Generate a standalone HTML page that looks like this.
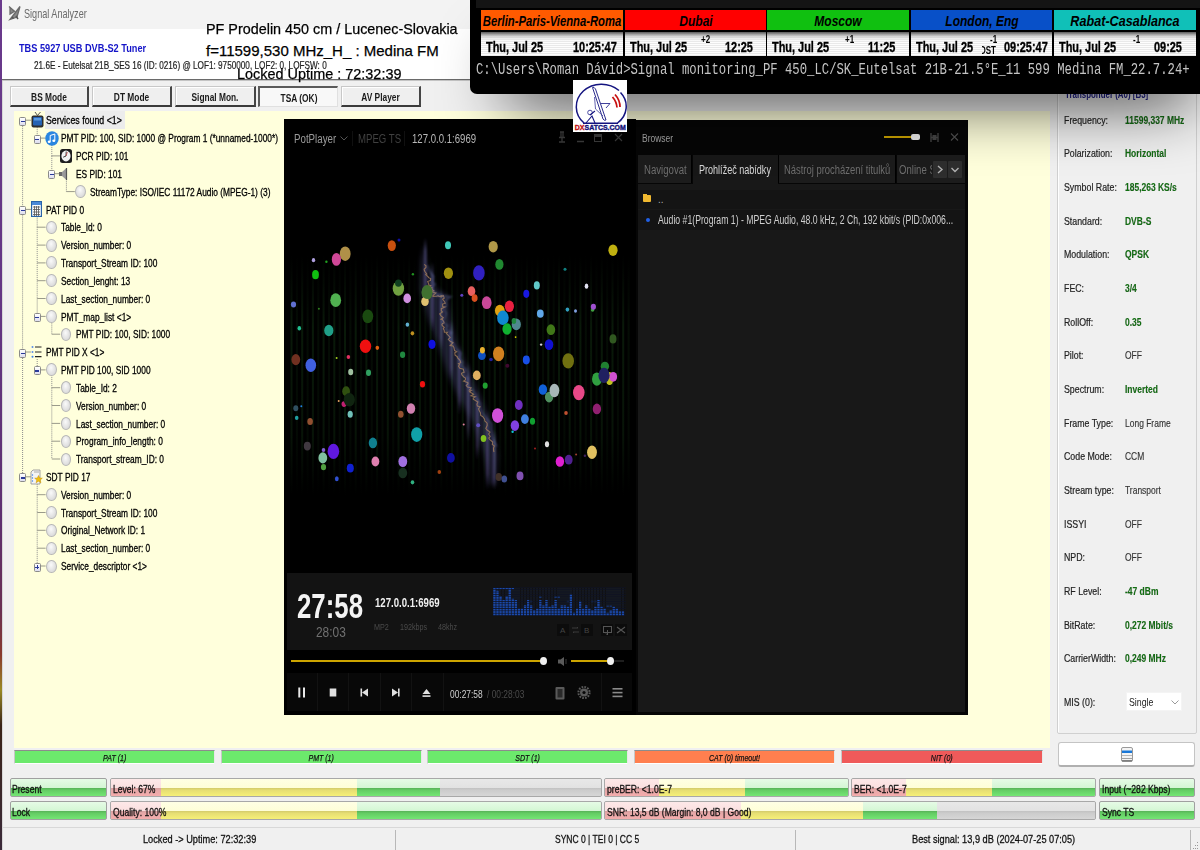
<!DOCTYPE html>
<html><head><meta charset="utf-8">
<style>
*{margin:0;padding:0;box-sizing:border-box}
html,body{width:1200px;height:850px;overflow:hidden;background:#f0f0f0;font-family:"Liberation Sans",sans-serif;position:relative}
.a{position:absolute}
.t{position:absolute;white-space:nowrap;transform-origin:0 0;line-height:1}
</style></head><body>
<!-- purple left strip -->
<div class="a" style="left:0;top:0;width:2px;height:850px;background:linear-gradient(#6a3a8c 0,#643684 300px,#5e3070 520px,#6a3052 610px,#8a3a2c 655px,#9a8a24 690px,#3a2418 725px,#3a2a3a 850px)"></div><div class="a" style="left:2px;top:0;width:1px;height:850px;background:#d8d8d8"></div>
<!-- title bar -->
<div class="a" style="left:2px;top:0;width:1198px;height:29px;background:#f3f3f3"></div>
<div class="t" style="left:24px;top:7px;font-size:13px;color:#6a6a6a;transform:scaleX(.70)">Signal Analyzer</div>
<svg class="a" style="left:8px;top:5px" width="13" height="16" viewBox="0 0 13 16"><path d="M1 1.5 L6 6 M2 2 V9 L7 6 M12 1.5 L2 14.5 L9 12 Z" stroke="#6a6a6a" stroke-width="1.3" fill="#8a8a8a"/><path d="M4 12 L5.5 13.5 M8 11 L10 14" stroke="#555" stroke-width="1.5"/></svg>
<!-- header white -->
<div class="a" style="left:2px;top:29px;width:1198px;height:50px;background:#fff"></div>
<div class="a" style="left:2px;top:79px;width:1198px;height:1px;background:#6a6a6a"></div><div class="a" style="left:2px;top:80px;width:1198px;height:1px;background:#c4c4c4"></div>
<div class="t" style="left:19px;top:43px;font-size:11.5px;font-weight:bold;color:#1414c8;transform:scaleX(.8)">TBS 5927 USB DVB-S2 Tuner</div>
<div class="t" style="left:34px;top:60px;font-size:10.5px;color:#222;-webkit-text-stroke:.2px #222;transform:scaleX(.78)">21.6E - Eutelsat 21B_SES 16 (ID: 0216) @ LOF1: 9750000, LOF2: 0, LOFSW: 0</div>
<div class="t" style="left:206px;top:21px;font-size:15px;color:#000;-webkit-text-stroke:.25px #000;transform:scaleX(.958)">PF Prodelin 450 cm / Lucenec-Slovakia</div>
<div class="t" style="left:206px;top:43px;font-size:15px;color:#000;-webkit-text-stroke:.25px #000;transform:scaleX(1.0)">f=11599,530 MHz_H_ : Medina FM</div>
<div class="t" style="left:237px;top:66px;font-size:15px;color:#000;-webkit-text-stroke:.25px #000;transform:scaleX(.962)">Locked Uptime : 72:32:39</div>


<!-- buttons -->
<style>
.btn{position:absolute;top:86px;height:21px;background:#efefef;border-top:1px solid #c8c8c8;border-left:1px solid #c8c8c8;border-right:2px solid #454545;border-bottom:2px solid #3a3a3a;box-shadow:inset 1px 1px 0 #fff}
.btn span{position:absolute;left:0;right:0;top:4px;text-align:center;font-size:11px;font-weight:bold;color:#1a1a1a;transform:scaleX(.76);white-space:nowrap}
.btn.on{background:#f8f8f8;border-top:2px solid #5a5a5a;border-left:2px solid #5a5a5a;border-right:1px solid #e0e0e0;border-bottom:1px solid #e0e0e0;box-shadow:none}
.btn.on span{top:4px;left:1px}
</style>
<div class="btn" style="left:10px;width:79px"><span>BS Mode</span></div>
<div class="btn" style="left:92px;width:80px"><span>DT Mode</span></div>
<div class="btn" style="left:175px;width:81px"><span>Signal Mon.</span></div>
<div class="btn on" style="left:258px;width:80px"><span>TSA (OK)</span></div>
<div class="btn" style="left:341px;width:80px"><span>AV Player</span></div>
<!-- tree area -->
<div class="a" style="left:14px;top:111px;width:1036px;height:637px;background:#ffffdc"></div>

<!-- TREE -->
<style>.tr{font-size:11px;color:#000;transform:scaleX(.76);-webkit-text-stroke:.3px #000}</style>
<div id="tree">
<svg class="a" style="left:14px;top:111px" width="300" height="470"><line x1="8.6" y1="9.2" x2="8.6" y2="98.4" stroke="#8c8c8c" stroke-width="1" stroke-dasharray="1 1"/><line x1="8.6" y1="9.2" x2="17.0" y2="9.2" stroke="#9a9a8a" stroke-width="1"/><line x1="23.2" y1="16.2" x2="23.2" y2="27.1" stroke="#8c8c8c" stroke-width="1" stroke-dasharray="1 1"/><line x1="23.2" y1="27.1" x2="31.6" y2="27.1" stroke="#9a9a8a" stroke-width="1"/><line x1="37.8" y1="44.9" x2="37.8" y2="62.7" stroke="#8c8c8c" stroke-width="1" stroke-dasharray="1 1"/><line x1="37.8" y1="34.1" x2="37.8" y2="44.9" stroke="#8c8c8c" stroke-width="1" stroke-dasharray="1 1"/><line x1="37.8" y1="44.9" x2="46.2" y2="44.9" stroke="#9a9a8a" stroke-width="1"/><line x1="37.8" y1="62.7" x2="46.2" y2="62.7" stroke="#9a9a8a" stroke-width="1"/><line x1="52.4" y1="69.7" x2="52.4" y2="80.6" stroke="#8c8c8c" stroke-width="1" stroke-dasharray="1 1"/><line x1="52.4" y1="80.6" x2="60.8" y2="80.6" stroke="#9a9a8a" stroke-width="1"/><line x1="8.6" y1="98.4" x2="8.6" y2="241.0" stroke="#8c8c8c" stroke-width="1" stroke-dasharray="1 1"/><line x1="8.6" y1="98.4" x2="17.0" y2="98.4" stroke="#9a9a8a" stroke-width="1"/><line x1="23.2" y1="116.2" x2="23.2" y2="134.1" stroke="#8c8c8c" stroke-width="1" stroke-dasharray="1 1"/><line x1="23.2" y1="105.4" x2="23.2" y2="116.2" stroke="#8c8c8c" stroke-width="1" stroke-dasharray="1 1"/><line x1="23.2" y1="116.2" x2="31.6" y2="116.2" stroke="#9a9a8a" stroke-width="1"/><line x1="23.2" y1="134.1" x2="23.2" y2="151.9" stroke="#8c8c8c" stroke-width="1" stroke-dasharray="1 1"/><line x1="23.2" y1="134.1" x2="31.6" y2="134.1" stroke="#9a9a8a" stroke-width="1"/><line x1="23.2" y1="151.9" x2="23.2" y2="169.7" stroke="#8c8c8c" stroke-width="1" stroke-dasharray="1 1"/><line x1="23.2" y1="151.9" x2="31.6" y2="151.9" stroke="#9a9a8a" stroke-width="1"/><line x1="23.2" y1="169.7" x2="23.2" y2="187.5" stroke="#8c8c8c" stroke-width="1" stroke-dasharray="1 1"/><line x1="23.2" y1="169.7" x2="31.6" y2="169.7" stroke="#9a9a8a" stroke-width="1"/><line x1="23.2" y1="187.5" x2="23.2" y2="205.4" stroke="#8c8c8c" stroke-width="1" stroke-dasharray="1 1"/><line x1="23.2" y1="187.5" x2="31.6" y2="187.5" stroke="#9a9a8a" stroke-width="1"/><line x1="23.2" y1="205.4" x2="31.6" y2="205.4" stroke="#9a9a8a" stroke-width="1"/><line x1="37.8" y1="212.4" x2="37.8" y2="223.2" stroke="#8c8c8c" stroke-width="1" stroke-dasharray="1 1"/><line x1="37.8" y1="223.2" x2="46.2" y2="223.2" stroke="#9a9a8a" stroke-width="1"/><line x1="8.6" y1="241.0" x2="8.6" y2="365.8" stroke="#8c8c8c" stroke-width="1" stroke-dasharray="1 1"/><line x1="8.6" y1="241.0" x2="17.0" y2="241.0" stroke="#9a9a8a" stroke-width="1"/><line x1="23.2" y1="248.0" x2="23.2" y2="258.9" stroke="#8c8c8c" stroke-width="1" stroke-dasharray="1 1"/><line x1="23.2" y1="258.9" x2="31.6" y2="258.9" stroke="#9a9a8a" stroke-width="1"/><line x1="37.8" y1="276.7" x2="37.8" y2="294.5" stroke="#8c8c8c" stroke-width="1" stroke-dasharray="1 1"/><line x1="37.8" y1="265.9" x2="37.8" y2="276.7" stroke="#8c8c8c" stroke-width="1" stroke-dasharray="1 1"/><line x1="37.8" y1="276.7" x2="46.2" y2="276.7" stroke="#9a9a8a" stroke-width="1"/><line x1="37.8" y1="294.5" x2="37.8" y2="312.4" stroke="#8c8c8c" stroke-width="1" stroke-dasharray="1 1"/><line x1="37.8" y1="294.5" x2="46.2" y2="294.5" stroke="#9a9a8a" stroke-width="1"/><line x1="37.8" y1="312.4" x2="37.8" y2="330.2" stroke="#8c8c8c" stroke-width="1" stroke-dasharray="1 1"/><line x1="37.8" y1="312.4" x2="46.2" y2="312.4" stroke="#9a9a8a" stroke-width="1"/><line x1="37.8" y1="330.2" x2="37.8" y2="348.0" stroke="#8c8c8c" stroke-width="1" stroke-dasharray="1 1"/><line x1="37.8" y1="330.2" x2="46.2" y2="330.2" stroke="#9a9a8a" stroke-width="1"/><line x1="37.8" y1="348.0" x2="46.2" y2="348.0" stroke="#9a9a8a" stroke-width="1"/><line x1="8.6" y1="365.8" x2="17.0" y2="365.8" stroke="#9a9a8a" stroke-width="1"/><line x1="23.2" y1="383.7" x2="23.2" y2="401.5" stroke="#8c8c8c" stroke-width="1" stroke-dasharray="1 1"/><line x1="23.2" y1="372.8" x2="23.2" y2="383.7" stroke="#8c8c8c" stroke-width="1" stroke-dasharray="1 1"/><line x1="23.2" y1="383.7" x2="31.6" y2="383.7" stroke="#9a9a8a" stroke-width="1"/><line x1="23.2" y1="401.5" x2="23.2" y2="419.3" stroke="#8c8c8c" stroke-width="1" stroke-dasharray="1 1"/><line x1="23.2" y1="401.5" x2="31.6" y2="401.5" stroke="#9a9a8a" stroke-width="1"/><line x1="23.2" y1="419.3" x2="23.2" y2="437.2" stroke="#8c8c8c" stroke-width="1" stroke-dasharray="1 1"/><line x1="23.2" y1="419.3" x2="31.6" y2="419.3" stroke="#9a9a8a" stroke-width="1"/><line x1="23.2" y1="437.2" x2="23.2" y2="455.0" stroke="#8c8c8c" stroke-width="1" stroke-dasharray="1 1"/><line x1="23.2" y1="437.2" x2="31.6" y2="437.2" stroke="#9a9a8a" stroke-width="1"/><line x1="23.2" y1="455.0" x2="31.6" y2="455.0" stroke="#9a9a8a" stroke-width="1"/></svg>
<div class="a" style="left:45px;top:111px;width:80px;height:18px;background:#ececec"></div>
<div class="a" style="left:19.1px;top:116.8px;width:7px;height:9px;border:1px solid #8a8a8a;border-radius:1.5px;background:linear-gradient(#fff,#dde)"><div style="position:absolute;left:0.5px;top:3px;width:4px;height:1.3px;background:#2a3a9a"></div></div>
<svg class="a" style="left:31.0px;top:111.2px" width="13" height="17" viewBox="0 0 13 17"><path d="M4 1 L6.5 4.5 L9.5 1" stroke="#444" fill="none" stroke-width="0.9"/><rect x="0.5" y="4.5" width="12" height="12" rx="2" fill="#2e2e2e"/><rect x="2" y="6" width="9" height="8.5" rx="1" fill="#2462b4"/><rect x="3" y="7" width="7" height="2.5" fill="#5a9ae0"/></svg>
<div class="t tr" style="left:46.3px;top:115.3px;transform:scaleX(.80)">Services found &lt;1&gt;</div>
<div class="a" style="left:33.7px;top:134.6px;width:7px;height:9px;border:1px solid #8a8a8a;border-radius:1.5px;background:linear-gradient(#fff,#dde)"><div style="position:absolute;left:0.5px;top:3px;width:4px;height:1.3px;background:#2a3a9a"></div></div>
<svg class="a" style="left:44.6px;top:130.6px" width="14" height="15" viewBox="0 0 14 15"><ellipse cx="7" cy="7.5" rx="6.7" ry="7.3" fill="#2a86e0"/><path d="M5.2 10.5 V4.5 L9.8 3 V9.5" stroke="#fff" fill="none" stroke-width="1"/><ellipse cx="4.2" cy="10.8" rx="1.5" ry="1.2" fill="#fff"/><ellipse cx="8.8" cy="9.8" rx="1.5" ry="1.2" fill="#fff"/></svg>
<div class="t tr" style="left:60.9px;top:133.2px">PMT PID: 100, SID: 1000 @ Program 1 (*unnamed-1000*)</div>
<svg class="a" style="left:60.2px;top:148.9px" width="12" height="14" viewBox="0 0 12 14"><rect x="0" y="0" width="12" height="14" rx="2.5" fill="#1e1e1e"/><ellipse cx="6" cy="7" rx="4.6" ry="5.4" fill="#f2f2f2"/><path d="M6 7 L3.2 8.2 M6 7 L6.2 2.5" stroke="#222" stroke-width="0.9"/><path d="M6 7 L7.5 3" stroke="#d03030" stroke-width="0.6"/></svg>
<div class="t tr" style="left:75.5px;top:151.0px">PCR PID: 101</div>
<div class="a" style="left:48.3px;top:170.2px;width:7px;height:9px;border:1px solid #8a8a8a;border-radius:1.5px;background:linear-gradient(#fff,#dde)"><div style="position:absolute;left:0.5px;top:3px;width:4px;height:1.3px;background:#2a3a9a"></div></div>
<svg class="a" style="left:58.2px;top:166.7px" width="11" height="14" viewBox="0 0 11 14"><rect x="1" y="5" width="3" height="4" fill="#6a6a6a"/><path d="M4 5 L8.5 1 V13 L4 9 Z" fill="#9a9a9a"/><path d="M8.5 1 V13" stroke="#555" stroke-width="1.2"/></svg>
<div class="t tr" style="left:75.5px;top:168.8px">ES PID: 101</div>
<div class="a" style="left:75.3px;top:185.1px;width:10.5px;height:13px;border-radius:50%;border:1px solid #b8b8b8;background:radial-gradient(ellipse at 45% 35%,#fafafa,#dcdcdc 70%,#c4c4c4)"></div>
<div class="t tr" style="left:90.1px;top:186.7px">StreamType: ISO/IEC 11172 Audio (MPEG-1) (3)</div>
<div class="a" style="left:19.1px;top:205.9px;width:7px;height:9px;border:1px solid #8a8a8a;border-radius:1.5px;background:linear-gradient(#fff,#dde)"><div style="position:absolute;left:0.5px;top:3px;width:4px;height:1.3px;background:#2a3a9a"></div></div>
<svg class="a" style="left:31.0px;top:201.4px" width="11" height="16" viewBox="0 0 11 16"><rect x="0.6" y="0.6" width="9.8" height="14.8" fill="#fff" stroke="#2a64a8" stroke-width="1.2"/><rect x="1" y="1" width="9" height="3" fill="#4a8ad8"/><path d="M2 6H9M2 8.5H9M2 11H9M2 13.5H9M3.5 5V15M5.5 5V15M7.5 5V15" stroke="#555" stroke-width="0.8"/></svg>
<div class="t tr" style="left:46.3px;top:204.5px">PAT PID 0</div>
<div class="a" style="left:46.1px;top:220.7px;width:10.5px;height:13px;border-radius:50%;border:1px solid #b8b8b8;background:radial-gradient(ellipse at 45% 35%,#fafafa,#dcdcdc 70%,#c4c4c4)"></div>
<div class="t tr" style="left:60.9px;top:222.3px">Table_Id: 0</div>
<div class="a" style="left:46.1px;top:238.6px;width:10.5px;height:13px;border-radius:50%;border:1px solid #b8b8b8;background:radial-gradient(ellipse at 45% 35%,#fafafa,#dcdcdc 70%,#c4c4c4)"></div>
<div class="t tr" style="left:60.9px;top:240.2px">Version_number: 0</div>
<div class="a" style="left:46.1px;top:256.4px;width:10.5px;height:13px;border-radius:50%;border:1px solid #b8b8b8;background:radial-gradient(ellipse at 45% 35%,#fafafa,#dcdcdc 70%,#c4c4c4)"></div>
<div class="t tr" style="left:60.9px;top:258.0px">Transport_Stream ID: 100</div>
<div class="a" style="left:46.1px;top:274.2px;width:10.5px;height:13px;border-radius:50%;border:1px solid #b8b8b8;background:radial-gradient(ellipse at 45% 35%,#fafafa,#dcdcdc 70%,#c4c4c4)"></div>
<div class="t tr" style="left:60.9px;top:275.8px">Section_lenght: 13</div>
<div class="a" style="left:46.1px;top:292.0px;width:10.5px;height:13px;border-radius:50%;border:1px solid #b8b8b8;background:radial-gradient(ellipse at 45% 35%,#fafafa,#dcdcdc 70%,#c4c4c4)"></div>
<div class="t tr" style="left:60.9px;top:293.6px">Last_section_number: 0</div>
<div class="a" style="left:33.7px;top:312.9px;width:7px;height:9px;border:1px solid #8a8a8a;border-radius:1.5px;background:linear-gradient(#fff,#dde)"><div style="position:absolute;left:0.5px;top:3px;width:4px;height:1.3px;background:#2a3a9a"></div></div>
<div class="a" style="left:46.1px;top:309.9px;width:10.5px;height:13px;border-radius:50%;border:1px solid #b8b8b8;background:radial-gradient(ellipse at 45% 35%,#fafafa,#dcdcdc 70%,#c4c4c4)"></div>
<div class="t tr" style="left:60.9px;top:311.5px">PMT_map_list &lt;1&gt;</div>
<div class="a" style="left:60.7px;top:327.7px;width:10.5px;height:13px;border-radius:50%;border:1px solid #b8b8b8;background:radial-gradient(ellipse at 45% 35%,#fafafa,#dcdcdc 70%,#c4c4c4)"></div>
<div class="t tr" style="left:75.5px;top:329.3px">PMT PID: 100, SID: 1000</div>
<div class="a" style="left:19.1px;top:348.5px;width:7px;height:9px;border:1px solid #8a8a8a;border-radius:1.5px;background:linear-gradient(#fff,#dde)"><div style="position:absolute;left:0.5px;top:3px;width:4px;height:1.3px;background:#2a3a9a"></div></div>
<svg class="a" style="left:31.0px;top:345.0px" width="11" height="14" viewBox="0 0 11 14"><circle cx="1.5" cy="2" r="1" fill="#5a8ee8"/><circle cx="1.5" cy="7" r="1" fill="#5a8ee8"/><circle cx="1.5" cy="11.7" r="1" fill="#3a7ee8"/><path d="M4 2H10.5M4 7H10.5M4 11.7H10.5" stroke="#222" stroke-width="1.2"/></svg>
<div class="t tr" style="left:46.3px;top:347.1px">PMT PID X &lt;1&gt;</div>
<div class="a" style="left:33.7px;top:366.4px;width:7px;height:9px;border:1px solid #8a8a8a;border-radius:1.5px;background:linear-gradient(#fff,#dde)"><div style="position:absolute;left:0.5px;top:3px;width:4px;height:1.3px;background:#2a3a9a"></div></div>
<div class="a" style="left:46.1px;top:363.4px;width:10.5px;height:13px;border-radius:50%;border:1px solid #b8b8b8;background:radial-gradient(ellipse at 45% 35%,#fafafa,#dcdcdc 70%,#c4c4c4)"></div>
<div class="t tr" style="left:60.9px;top:365.0px">PMT PID 100, SID 1000</div>
<div class="a" style="left:60.7px;top:381.2px;width:10.5px;height:13px;border-radius:50%;border:1px solid #b8b8b8;background:radial-gradient(ellipse at 45% 35%,#fafafa,#dcdcdc 70%,#c4c4c4)"></div>
<div class="t tr" style="left:75.5px;top:382.8px">Table_Id: 2</div>
<div class="a" style="left:60.7px;top:399.0px;width:10.5px;height:13px;border-radius:50%;border:1px solid #b8b8b8;background:radial-gradient(ellipse at 45% 35%,#fafafa,#dcdcdc 70%,#c4c4c4)"></div>
<div class="t tr" style="left:75.5px;top:400.6px">Version_number: 0</div>
<div class="a" style="left:60.7px;top:416.9px;width:10.5px;height:13px;border-radius:50%;border:1px solid #b8b8b8;background:radial-gradient(ellipse at 45% 35%,#fafafa,#dcdcdc 70%,#c4c4c4)"></div>
<div class="t tr" style="left:75.5px;top:418.5px">Last_section_number: 0</div>
<div class="a" style="left:60.7px;top:434.7px;width:10.5px;height:13px;border-radius:50%;border:1px solid #b8b8b8;background:radial-gradient(ellipse at 45% 35%,#fafafa,#dcdcdc 70%,#c4c4c4)"></div>
<div class="t tr" style="left:75.5px;top:436.3px">Program_info_length: 0</div>
<div class="a" style="left:60.7px;top:452.5px;width:10.5px;height:13px;border-radius:50%;border:1px solid #b8b8b8;background:radial-gradient(ellipse at 45% 35%,#fafafa,#dcdcdc 70%,#c4c4c4)"></div>
<div class="t tr" style="left:75.5px;top:454.1px">Transport_stream_ID: 0</div>
<div class="a" style="left:19.1px;top:473.3px;width:7px;height:9px;border:1px solid #8a8a8a;border-radius:1.5px;background:linear-gradient(#fff,#dde)"><div style="position:absolute;left:0.5px;top:3px;width:4px;height:1.3px;background:#2a3a9a"></div></div>
<svg class="a" style="left:30.0px;top:468.8px" width="13" height="16" viewBox="0 0 13 16"><path d="M1 3 L3 1 H10 V15 H1 Z" fill="#f4f4f4" stroke="#999" stroke-width="0.9"/><path d="M4 3H9" stroke="#aaa"/><circle cx="2.5" cy="6" r="0.7" fill="#3a7ee8"/><circle cx="2.5" cy="9" r="0.7" fill="#3a7ee8"/><circle cx="2.5" cy="12" r="0.7" fill="#3a7ee8"/><path d="M8.5 6.5 L9.6 9 L12.3 9.2 L10.2 11 L10.9 13.7 L8.5 12.2 L6.1 13.7 L6.8 11 L4.7 9.2 L7.4 9 Z" fill="#f0c010" stroke="#c89000" stroke-width="0.5"/></svg>
<div class="t tr" style="left:46.3px;top:471.9px">SDT PID 17</div>
<div class="a" style="left:46.1px;top:488.2px;width:10.5px;height:13px;border-radius:50%;border:1px solid #b8b8b8;background:radial-gradient(ellipse at 45% 35%,#fafafa,#dcdcdc 70%,#c4c4c4)"></div>
<div class="t tr" style="left:60.9px;top:489.8px">Version_number: 0</div>
<div class="a" style="left:46.1px;top:506.0px;width:10.5px;height:13px;border-radius:50%;border:1px solid #b8b8b8;background:radial-gradient(ellipse at 45% 35%,#fafafa,#dcdcdc 70%,#c4c4c4)"></div>
<div class="t tr" style="left:60.9px;top:507.6px">Transport_Stream ID: 100</div>
<div class="a" style="left:46.1px;top:523.8px;width:10.5px;height:13px;border-radius:50%;border:1px solid #b8b8b8;background:radial-gradient(ellipse at 45% 35%,#fafafa,#dcdcdc 70%,#c4c4c4)"></div>
<div class="t tr" style="left:60.9px;top:525.4px">Original_Network ID: 1</div>
<div class="a" style="left:46.1px;top:541.7px;width:10.5px;height:13px;border-radius:50%;border:1px solid #b8b8b8;background:radial-gradient(ellipse at 45% 35%,#fafafa,#dcdcdc 70%,#c4c4c4)"></div>
<div class="t tr" style="left:60.9px;top:543.3px">Last_section_number: 0</div>
<div class="a" style="left:33.7px;top:562.5px;width:7px;height:9px;border:1px solid #8a8a8a;border-radius:1.5px;background:linear-gradient(#fff,#dde)"><div style="position:absolute;left:0.5px;top:3px;width:4px;height:1.3px;background:#2a3a9a"></div><div style="position:absolute;left:1.9px;top:1.5px;width:1.3px;height:4.3px;background:#2a3a9a"></div></div>
<div class="a" style="left:46.1px;top:559.5px;width:10.5px;height:13px;border-radius:50%;border:1px solid #b8b8b8;background:radial-gradient(ellipse at 45% 35%,#fafafa,#dcdcdc 70%,#c4c4c4)"></div>
<div class="t tr" style="left:60.9px;top:561.1px">Service_descriptor &lt;1&gt;</div>
</div>
<!-- /TREE -->

<!-- RIGHT PANEL -->
<style>
.rl{position:absolute;left:1064px;font-size:11px;color:#222;-webkit-text-stroke:.2px #222;margin-top:-1px;transform:scaleX(.8);transform-origin:0 0;white-space:nowrap;line-height:1}
.rv{position:absolute;left:1125px;font-size:11px;color:#333;-webkit-text-stroke:.15px #333;transform:scaleX(.77);transform-origin:0 0;white-space:nowrap;line-height:1}
.rv.g{color:#107010;font-weight:bold}
</style>
<div class="a" style="left:1057px;top:86px;width:140px;height:648px;border:1px solid #d0d0d0;border-radius:2px;box-shadow:inset 1px 1px 0 #fff"></div>
<div class="t" style="left:1065px;top:89px;font-size:11px;font-weight:bold;color:#20208a;transform:scaleX(.72)">Transponder (A0) [B3]</div>
<div class="rl" style="top:115.6px">Frequency:</div><div class="rv g" style="top:114.6px">11599,337 MHz</div>
<div class="rl" style="top:149.3px">Polarization:</div><div class="rv g" style="top:148.3px">Horizontal</div>
<div class="rl" style="top:182.9px">Symbol Rate:</div><div class="rv g" style="top:181.9px">185,263 KS/s</div>
<div class="rl" style="top:216.6px">Standard:</div><div class="rv g" style="top:215.6px">DVB-S</div>
<div class="rl" style="top:250.2px">Modulation:</div><div class="rv g" style="top:249.2px">QPSK</div>
<div class="rl" style="top:283.9px">FEC:</div><div class="rv g" style="top:282.9px">3/4</div>
<div class="rl" style="top:317.6px">RollOff:</div><div class="rv g" style="top:316.6px">0.35</div>
<div class="rl" style="top:351.2px">Pilot:</div><div class="rv" style="top:350.2px">OFF</div>
<div class="rl" style="top:384.9px">Spectrum:</div><div class="rv g" style="top:383.9px">Inverted</div>
<div class="rl" style="top:418.5px">Frame Type:</div><div class="rv" style="top:417.5px">Long Frame</div>
<div class="rl" style="top:452.2px">Code Mode:</div><div class="rv" style="top:451.2px">CCM</div>
<div class="rl" style="top:485.9px">Stream type:</div><div class="rv" style="top:484.9px">Transport</div>
<div class="rl" style="top:519.5px">ISSYI</div><div class="rv" style="top:518.5px">OFF</div>
<div class="rl" style="top:553.2px">NPD:</div><div class="rv" style="top:552.2px">OFF</div>
<div class="rl" style="top:586.8px">RF Level:</div><div class="rv g" style="top:585.8px">-47 dBm</div>
<div class="rl" style="top:620.5px">BitRate:</div><div class="rv g" style="top:619.5px">0,272 Mbit/s</div>
<div class="rl" style="top:654.2px">CarrierWidth:</div><div class="rv g" style="top:653.2px">0,249 MHz</div>
<div class="rl" style="top:698.2px">MIS (0):</div>
<div class="a" style="left:1126px;top:692px;width:56px;height:19px;background:#fff;border:1px solid #f4f4f4"></div>
<div class="t" style="left:1129px;top:697px;font-size:11px;color:#222;transform:scaleX(.8)">Single</div>
<svg class="a" style="left:1171px;top:700px" width="8" height="5"><path d="M0.5 0.5 L4 4 L7.5 0.5" stroke="#9a9a9a" fill="none"/></svg>
<!-- status pills -->
<style>
.pill{position:absolute;top:750px;height:14px;border-top:1px solid #8c8c8c;border-bottom:1px solid #fff;border-left:1px solid #c8c8c8;border-right:1px solid #e8e8e8;font-size:9.5px;font-style:italic;color:#111;text-align:center;line-height:13px;-webkit-text-stroke:.25px #111}
.pill span{display:inline-block;transform:scaleX(.74)}
</style>
<div class="pill" style="left:14px;width:201px;background:#6ce96c"><span>PAT (1)</span></div>
<div class="pill" style="left:221px;width:201px;background:#6ce96c"><span>PMT (1)</span></div>
<div class="pill" style="left:427px;width:201px;background:#6ce96c"><span>SDT (1)</span></div>
<div class="pill" style="left:634px;width:201px;background:#ff7f4f"><span>CAT (0) timeout!</span></div>
<div class="pill" style="left:841px;width:202px;background:#ef5a5a"><span>NIT (0)</span></div>
<div class="a" style="left:1058px;top:742px;width:137px;height:25px;background:#fff;border:1px solid #c4c4c4;border-bottom:2px solid #b0b0b0;border-radius:3px"></div>
<!-- icon in white button -->
<svg class="a" style="left:1121px;top:747px" width="12" height="15" viewBox="0 0 12 15"><rect x="0.5" y="0.5" width="11" height="14" rx="1.5" fill="#f4f4f4" stroke="#9a9a9a"/><rect x="1" y="3.5" width="10" height="2.5" fill="#1a78d8"/><rect x="1" y="8" width="10" height="1" fill="#b8b8b8"/><rect x="1" y="11" width="10" height="1" fill="#a0a0a0"/><rect x="1" y="13" width="10" height="1.5" fill="#808080"/></svg>
<!-- bottom meters -->
<style>
.gb{position:absolute;height:19px;border:1px solid #a0a0a0;border-radius:2px;background:linear-gradient(#e6fbe6 0,#d4f6d4 50%,#58b458 54%,#64cc64 66%,#74e674 100%);overflow:hidden}
.gb span,.bar span{position:absolute;left:2px;top:4px;font-size:11px;color:#111;-webkit-text-stroke:.3px #111;transform:scaleX(.78);transform-origin:0 0;white-space:nowrap}
.bar{position:absolute;height:19px;border:1px solid #a8a8a8;border-radius:2px;overflow:hidden;background:#d0d0d0}
.seg{position:absolute;top:0;bottom:0}
.pk{background:linear-gradient(#fde8e8 0,#fbe0e0 50%,#d8a0a0 54%,#e6a8a8 66%,#f4acac 100%)}
.yl{background:linear-gradient(#ffffe4 0,#fefed8 50%,#d4cc6c 54%,#e6de74 66%,#f6f078 100%)}
.gr{background:linear-gradient(#e6fbe6 0,#d4f6d4 50%,#58b458 54%,#64cc64 66%,#74e674 100%)}
.gy{background:linear-gradient(#e8e8e8 0,#e2e2e2 50%,#c2c2c2 54%,#cccccc 66%,#d6d6d6 100%)}
</style>
<div class="gb" style="left:10px;top:778px;width:97px"><span style="left:1px">Present</span></div>
<div class="gb" style="left:10px;top:801px;width:97px"><span style="left:1px">Lock</span></div>
<div class="bar" style="left:110px;top:778px;width:492px">
 <div class="seg pk" style="left:0;width:50px"></div><div class="seg yl" style="left:50px;width:196px"></div><div class="seg gr" style="left:246px;width:83px"></div><div class="seg gy" style="left:329px;right:0"></div><span>Level: 67%</span></div>
<div class="bar" style="left:110px;top:801px;width:492px">
 <div class="seg pk" style="left:0;width:50px"></div><div class="seg yl" style="left:50px;width:196px"></div><div class="seg gr" style="left:246px;right:0"></div><span>Quality: 100%</span></div>
<div class="bar" style="left:604px;top:778px;width:245px">
 <div class="seg pk" style="left:0;width:54px"></div><div class="seg yl" style="left:54px;width:86px"></div><div class="seg gr" style="left:140px;right:0"></div><span>preBER: &lt;1.0E-7</span></div>
<div class="bar" style="left:851px;top:778px;width:245px">
 <div class="seg pk" style="left:0;width:54px"></div><div class="seg yl" style="left:54px;width:86px"></div><div class="seg gr" style="left:140px;right:0"></div><span>BER: &lt;1.0E-7</span></div>
<div class="bar" style="left:604px;top:801px;width:492px">
 <div class="seg pk" style="left:0;width:136px"></div><div class="seg yl" style="left:136px;width:122px"></div><div class="seg gr" style="left:258px;width:74px"></div><div class="seg gy" style="left:332px;right:0"></div><span>SNR: 13,5 dB (Margin: 8,0 dB | Good)</span></div>
<div class="gb" style="left:1099px;top:778px;width:96px"><span>Input (~282 Kbps)</span></div>
<div class="gb" style="left:1099px;top:801px;width:96px"><span>Sync TS</span></div>
<!-- status bar -->
<div class="a" style="left:1190px;top:830px;width:1px;height:20px;background:#b8b8b8"></div>
<svg class="a" style="left:1192px;top:840px" width="8" height="10"><rect x="5" y="2" width="1" height="1" fill="#999"/><rect x="3" y="5" width="1" height="1" fill="#999"/><rect x="5" y="5" width="1" height="1" fill="#999"/><rect x="1" y="8" width="1" height="1" fill="#999"/><rect x="3" y="8" width="1" height="1" fill="#999"/><rect x="5" y="8" width="1" height="1" fill="#999"/></svg>
<div class="a" style="left:2px;top:827px;width:1198px;height:1px;background:#d8d8d8"></div>
<div class="a" style="left:395px;top:830px;width:1px;height:20px;background:#b8b8b8"></div>
<div class="a" style="left:795px;top:830px;width:1px;height:20px;background:#b8b8b8"></div>
<div class="t" style="left:143px;top:834px;font-size:11.5px;color:#111;-webkit-text-stroke:.3px #111;transform:scaleX(.8)">Locked -&gt; Uptime: 72:32:39</div>
<div class="t" style="left:555px;top:834px;font-size:11.5px;color:#111;-webkit-text-stroke:.3px #111;transform:scaleX(.74)">SYNC 0 | TEI 0 | CC 5</div>
<div class="t" style="left:912px;top:834px;font-size:11.5px;color:#111;-webkit-text-stroke:.3px #111;transform:scaleX(.8)">Best signal: 13,9 dB (2024-07-25 07:05)</div>



<!-- POTPLAYER -->
<div class="a" style="left:284px;top:119px;width:352px;height:596px;background:#000"></div>
<svg class="a" style="left:284px;top:119px" width="352" height="596"><defs><filter id="bl" x="-50%" y="-10%" width="200%" height="120%"><feGaussianBlur stdDeviation="2.2"/></filter><pattern id="hl" width="3" height="2.35" patternUnits="userSpaceOnUse" y="0.3"><rect width="3" height="0.8" fill="#0e1222" opacity=".85"/></pattern><linearGradient id="sg" x1="0" y1="0" x2="0" y2="1"><stop offset="0" stop-color="#0a1a0a" stop-opacity="0"/><stop offset=".3" stop-color="#0a1c0a"/><stop offset=".75" stop-color="#081608"/><stop offset="1" stop-color="#081608" stop-opacity="0"/></linearGradient><linearGradient id="vg" x1="0" y1="0" x2="0" y2="1"><stop offset="0" stop-color="#8080d0" stop-opacity="0"/><stop offset=".2" stop-color="#8888d8" stop-opacity=".4"/><stop offset=".8" stop-color="#8070c0" stop-opacity=".35"/><stop offset="1" stop-color="#6050a0" stop-opacity="0"/></linearGradient></defs><g><rect x="6.5" y="136" width="2" height="240" fill="url(#sg)" opacity="0.9"/><rect x="11.9" y="136" width="2" height="240" fill="url(#sg)" opacity="0.45"/><rect x="17.2" y="136" width="2" height="240" fill="url(#sg)" opacity="0.9"/><rect x="22.6" y="136" width="2" height="240" fill="url(#sg)" opacity="0.45"/><rect x="27.9" y="136" width="2" height="240" fill="url(#sg)" opacity="0.9"/><rect x="33.3" y="136" width="2" height="240" fill="url(#sg)" opacity="0.45"/><rect x="38.6" y="136" width="2" height="240" fill="url(#sg)" opacity="0.9"/><rect x="44.0" y="136" width="2" height="240" fill="url(#sg)" opacity="0.45"/><rect x="49.3" y="136" width="2" height="240" fill="url(#sg)" opacity="0.9"/><rect x="54.7" y="136" width="2" height="240" fill="url(#sg)" opacity="0.45"/><rect x="60.0" y="136" width="2" height="240" fill="url(#sg)" opacity="0.9"/><rect x="65.4" y="136" width="2" height="240" fill="url(#sg)" opacity="0.45"/><rect x="70.7" y="136" width="2" height="240" fill="url(#sg)" opacity="0.9"/><rect x="76.1" y="136" width="2" height="240" fill="url(#sg)" opacity="0.45"/><rect x="81.4" y="136" width="2" height="240" fill="url(#sg)" opacity="0.9"/><rect x="86.8" y="136" width="2" height="240" fill="url(#sg)" opacity="0.45"/><rect x="92.1" y="136" width="2" height="240" fill="url(#sg)" opacity="0.9"/><rect x="97.5" y="136" width="2" height="240" fill="url(#sg)" opacity="0.45"/><rect x="102.8" y="136" width="2" height="240" fill="url(#sg)" opacity="0.9"/><rect x="108.2" y="136" width="2" height="240" fill="url(#sg)" opacity="0.45"/><rect x="113.5" y="136" width="2" height="240" fill="url(#sg)" opacity="0.9"/><rect x="118.9" y="136" width="2" height="240" fill="url(#sg)" opacity="0.45"/><rect x="124.2" y="136" width="2" height="240" fill="url(#sg)" opacity="0.9"/><rect x="129.6" y="136" width="2" height="240" fill="url(#sg)" opacity="0.45"/><rect x="134.9" y="136" width="2" height="240" fill="url(#sg)" opacity="0.9"/><rect x="140.3" y="136" width="2" height="240" fill="url(#sg)" opacity="0.45"/><rect x="145.6" y="136" width="2" height="240" fill="url(#sg)" opacity="0.9"/><rect x="151.0" y="136" width="2" height="240" fill="url(#sg)" opacity="0.45"/><rect x="156.3" y="136" width="2" height="240" fill="url(#sg)" opacity="0.9"/><rect x="161.7" y="136" width="2" height="240" fill="url(#sg)" opacity="0.45"/><rect x="167.0" y="136" width="2" height="240" fill="url(#sg)" opacity="0.9"/><rect x="172.4" y="136" width="2" height="240" fill="url(#sg)" opacity="0.45"/><rect x="177.7" y="136" width="2" height="240" fill="url(#sg)" opacity="0.9"/><rect x="183.1" y="136" width="2" height="240" fill="url(#sg)" opacity="0.45"/><rect x="188.4" y="136" width="2" height="240" fill="url(#sg)" opacity="0.9"/><rect x="193.8" y="136" width="2" height="240" fill="url(#sg)" opacity="0.45"/><rect x="199.1" y="136" width="2" height="240" fill="url(#sg)" opacity="0.9"/><rect x="204.5" y="136" width="2" height="240" fill="url(#sg)" opacity="0.45"/><rect x="209.8" y="136" width="2" height="240" fill="url(#sg)" opacity="0.9"/><rect x="215.2" y="136" width="2" height="240" fill="url(#sg)" opacity="0.45"/><rect x="220.5" y="136" width="2" height="240" fill="url(#sg)" opacity="0.9"/><rect x="225.9" y="136" width="2" height="240" fill="url(#sg)" opacity="0.45"/><rect x="231.2" y="136" width="2" height="240" fill="url(#sg)" opacity="0.9"/><rect x="236.6" y="136" width="2" height="240" fill="url(#sg)" opacity="0.45"/><rect x="241.9" y="136" width="2" height="240" fill="url(#sg)" opacity="0.9"/><rect x="247.3" y="136" width="2" height="240" fill="url(#sg)" opacity="0.45"/><rect x="252.6" y="136" width="2" height="240" fill="url(#sg)" opacity="0.9"/><rect x="258.0" y="136" width="2" height="240" fill="url(#sg)" opacity="0.45"/><rect x="263.3" y="136" width="2" height="240" fill="url(#sg)" opacity="0.9"/><rect x="268.7" y="136" width="2" height="240" fill="url(#sg)" opacity="0.45"/><rect x="274.0" y="136" width="2" height="240" fill="url(#sg)" opacity="0.9"/><rect x="279.4" y="136" width="2" height="240" fill="url(#sg)" opacity="0.45"/><rect x="284.7" y="136" width="2" height="240" fill="url(#sg)" opacity="0.9"/><rect x="290.1" y="136" width="2" height="240" fill="url(#sg)" opacity="0.45"/><rect x="295.4" y="136" width="2" height="240" fill="url(#sg)" opacity="0.9"/><rect x="300.8" y="136" width="2" height="240" fill="url(#sg)" opacity="0.45"/><rect x="306.1" y="136" width="2" height="240" fill="url(#sg)" opacity="0.9"/><rect x="311.5" y="136" width="2" height="240" fill="url(#sg)" opacity="0.45"/><rect x="316.8" y="136" width="2" height="240" fill="url(#sg)" opacity="0.9"/><rect x="322.2" y="136" width="2" height="240" fill="url(#sg)" opacity="0.45"/><rect x="327.5" y="136" width="2" height="240" fill="url(#sg)" opacity="0.9"/><rect x="332.9" y="136" width="2" height="240" fill="url(#sg)" opacity="0.45"/><rect x="338.2" y="136" width="2" height="240" fill="url(#sg)" opacity="0.9"/><rect x="343.6" y="136" width="2" height="240" fill="url(#sg)" opacity="0.45"/></g><filter id="bl2" x="-30%" y="-30%" width="160%" height="160%"><feGaussianBlur stdDeviation="2.5"/></filter><filter id="bl3" x="-50%" y="-10%" width="200%" height="120%"><feGaussianBlur stdDeviation="1.2"/></filter><path d="M140 126 L144 151 L152 169 L164 177 L168 206 L174 226 L184 249 L196 276 L208 306 L214 336 L212 366 L206 366 L200 336 L190 306 L176 281 L164 256 L154 226 L144 199 L136 171 L137 141 Z" fill="#6a68b0" opacity=".26" filter="url(#bl2)"/><rect x="140" y="119" width="2.5" height="60" fill="url(#vg)" filter="url(#bl3)"/><rect x="147" y="143" width="2.5" height="70" fill="url(#vg)" filter="url(#bl3)"/><rect x="156" y="171" width="2.5" height="60" fill="url(#vg)" filter="url(#bl3)"/><rect x="166" y="201" width="2.5" height="60" fill="url(#vg)" filter="url(#bl3)"/><rect x="174" y="226" width="2.5" height="70" fill="url(#vg)" filter="url(#bl3)"/><rect x="183" y="243" width="2.5" height="80" fill="url(#vg)" filter="url(#bl3)"/><rect x="192" y="271" width="2.5" height="70" fill="url(#vg)" filter="url(#bl3)"/><rect x="202" y="291" width="2.5" height="80" fill="url(#vg)" filter="url(#bl3)"/><rect x="209" y="311" width="2.5" height="60" fill="url(#vg)" filter="url(#bl3)"/><path d="M140.2 145.4 L142.0 146.7 L141.9 148.6 L140.1 150.3 L140.4 151.6 L140.9 152.5 L142.8 155.1 L141.8 155.6 L144.4 158.1 L144.6 158.7 L146.7 159.6 L146.5 161.4 L143.7 162.5 L144.8 165.1 L144.6 166.1 L147.0 166.6 L146.9 166.9 L145.1 167.9 L148.2 169.0 L147.0 170.1 L147.9 170.4 L149.8 171.8 L147.7 172.4 L149.3 173.7 L150.6 173.5 L152.0 174.0 L149.9 175.8 L149.1 176.2 L149.0 177.3 L152.9 177.1 L154.1 176.7 L154.0 177.2 L154.2 176.9 L156.1 177.7 L155.2 177.3 L154.1 177.3 L157.4 177.8 L158.8 176.7 L157.6 177.3 L156.8 176.9 L158.1 176.4 L158.3 177.4 L159.4 176.6 L160.2 179.2 L158.6 180.2 L160.4 182.5 L161.3 184.2 L158.6 185.1 L158.7 187.5 L161.0 187.9 L157.3 189.7 L157.3 191.8 L158.5 193.0 L155.7 194.9 L157.0 196.8 L159.3 198.7 L157.1 200.2 L158.3 200.4 L159.8 202.7 L160.1 203.9 L158.5 204.4 L157.8 205.9 L158.1 206.2 L159.2 207.5 L160.3 208.4 L159.3 209.7 L160.2 211.2 L160.4 213.2 L163.5 213.2 L162.4 214.6 L163.4 215.4 L166.2 218.4 L165.3 219.3 L164.3 220.3 L166.2 222.2 L169.0 223.7 L166.2 226.6 L169.1 226.9 L169.9 228.4 L170.6 231.6 L172.7 232.7 L170.8 233.9 L171.1 236.1 L173.4 237.8 L173.3 238.6 L175.8 241.2 L176.4 242.3 L176.7 243.7 L174.5 244.7 L175.5 245.4 L174.5 247.2 L175.9 249.3 L179.4 250.3 L179.8 252.6 L180.3 253.1 L177.5 254.3 L177.8 255.7 L180.1 258.2 L181.5 259.0 L181.4 260.9 L179.6 262.1 L183.9 263.7 L184.0 264.7 L182.2 266.6 L183.5 268.1 L187.1 268.8 L185.3 271.1 L187.4 271.3 L185.5 272.7 L189.6 275.2 L187.0 276.7 L191.4 277.8 L189.3 279.1 L189.3 280.1 L193.9 283.0 L192.9 285.3 L193.4 287.0 L196.1 287.8 L194.5 289.8 L195.4 292.1 L196.4 293.7 L196.7 296.4 L198.6 297.5 L200.6 300.1 L200.8 302.0 L202.1 303.2 L203.1 304.2 L203.2 306.5 L201.8 309.5 L203.1 311.0 L206.0 313.1 L204.7 315.0 L206.2 317.5 L204.8 319.1 L205.9 320.6 L208.7 323.0 L208.3 325.4 L210.3 326.9 L209.5 329.0 L209.6 331.3 L210.0 333.0" stroke="#b88a58" stroke-width="1.1" fill="none" opacity=".7"/><path d="M143.7 146.1 L144.9 150.9 L147.2 154.8 L149.7 157.5 L148.4 162.9 L151.0 165.3 L147.7 168.1 L148.4 169.9 L149.4 172.9 L154.7 175.6 L151.9 177.4 L157.0 176.3 L160.3 177.9 L158.3 177.9 L161.4 177.0 L166.9 177.7 L161.2 181.5 L162.5 185.9 L159.8 190.4 L162.1 194.4 L160.3 199.9 L158.5 202.9 L163.5 206.4 L161.6 210.6 L167.3 213.7 L164.6 215.5 L166.2 221.2 L169.6 224.5 L172.5 230.6 L176.9 233.9 L174.9 239.8 L178.6 243.4 L176.9 246.1 L181.7 250.9 L179.2 255.9 L183.8 259.6 L182.5 263.7 L184.4 267.7 L188.7 270.7 L191.3 275.9 L191.6 278.3 L195.8 283.7 L195.9 288.7 L198.1 294.0 L202.3 299.4 L207.6 304.6 L207.4 310.0 L207.9 315.2 L208.7 320.8 L213.0 327.5" stroke="#7078b8" stroke-width="1.4" fill="none" opacity=".45" filter="url(#bl3)"/><ellipse cx="107.8" cy="126.6" rx="4.1" ry="5.4" fill="#c85010"/><ellipse cx="115.0" cy="121.0" rx="1.5" ry="1.5" fill="#1010a0"/><ellipse cx="164.0" cy="126.2" rx="3" ry="4" fill="#40c8b8"/><ellipse cx="61.2" cy="134.7" rx="5.4" ry="7.3" fill="#b09048"/><ellipse cx="52.4" cy="140.4" rx="4.6" ry="6.4" fill="#d04898"/><ellipse cx="29.5" cy="141.2" rx="1.7" ry="2.1" fill="#b0a0e0"/><ellipse cx="42.4" cy="142.7" rx="1.2" ry="1.2" fill="#20a020"/><ellipse cx="31.5" cy="155.7" rx="3.4" ry="4.6" fill="#10c010"/><ellipse cx="164.4" cy="154.2" rx="4.6" ry="5.8" fill="#a09010"/><ellipse cx="128.9" cy="155.2" rx="1.2" ry="1.2" fill="#209020"/><ellipse cx="114.4" cy="169.5" rx="5.7" ry="7.3" fill="#70a040"/><ellipse cx="114.4" cy="164.1" rx="3.4" ry="3.7" fill="#104020"/><ellipse cx="143.0" cy="174.0" rx="5.4" ry="6.9" fill="#407030"/><ellipse cx="123.2" cy="179.4" rx="3.8" ry="4.9" fill="#d090e0"/><ellipse cx="141.0" cy="182.5" rx="3.8" ry="4.6" fill="#e0c070"/><ellipse cx="143.0" cy="173.0" rx="5.4" ry="6.9" fill="#407030"/><ellipse cx="9.5" cy="185.5" rx="2.6" ry="3" fill="#6070d0"/><ellipse cx="51.7" cy="181.2" rx="5.4" ry="6.9" fill="#50b050"/><ellipse cx="177.8" cy="176.3" rx="1.5" ry="1.5" fill="#6040c0"/><ellipse cx="83.8" cy="197.3" rx="5.4" ry="6.9" fill="#1a4a10"/><ellipse cx="15.3" cy="209.2" rx="1.8" ry="2.3" fill="#20c090"/><ellipse cx="44.8" cy="211.5" rx="4.6" ry="5.8" fill="#20a088"/><ellipse cx="123.4" cy="205.7" rx="1.8" ry="2.1" fill="#60b0d0"/><ellipse cx="128.4" cy="214.3" rx="1.8" ry="2.1" fill="#c09020"/><ellipse cx="148.0" cy="225.3" rx="3.5" ry="4.6" fill="#1010e0"/><ellipse cx="81.5" cy="227.3" rx="5.7" ry="6.8" fill="#f01010"/><ellipse cx="93.3" cy="228.8" rx="1.8" ry="2.1" fill="#e06010"/><ellipse cx="34.9" cy="189.8" rx="1" ry="1" fill="#308020"/><ellipse cx="209.2" cy="127.7" rx="4.6" ry="5.8" fill="#b09848"/><ellipse cx="215.4" cy="145.4" rx="4.1" ry="5.4" fill="#208830"/><ellipse cx="194.9" cy="153.9" rx="5.8" ry="7.6" fill="#3020c0"/><ellipse cx="329.0" cy="131.2" rx="4.6" ry="5.8" fill="#c0b010"/><ellipse cx="281.0" cy="150.3" rx="1.5" ry="1.5" fill="#108080"/><ellipse cx="252.8" cy="166.4" rx="3" ry="4.1" fill="#60c8c8"/><ellipse cx="302.5" cy="167.2" rx="1.8" ry="2.6" fill="#e0e0f0"/><ellipse cx="242.3" cy="174.8" rx="3" ry="4.1" fill="#1818e0"/><ellipse cx="187.5" cy="172.2" rx="3.8" ry="4.9" fill="#e86060"/><ellipse cx="190.6" cy="179.1" rx="3" ry="3.8" fill="#d85020"/><ellipse cx="202.7" cy="183.7" rx="4.9" ry="6.4" fill="#c84898"/><ellipse cx="225.4" cy="187.3" rx="4.6" ry="5.8" fill="#e82040"/><ellipse cx="215.8" cy="191.6" rx="4.9" ry="5.8" fill="#e0a010"/><ellipse cx="218.9" cy="198.8" rx="5.8" ry="7.3" fill="#1088d0"/><ellipse cx="232.3" cy="205.4" rx="4.6" ry="5.8" fill="#508890"/><ellipse cx="229.9" cy="202.0" rx="2.3" ry="3" fill="#208840"/><ellipse cx="223.0" cy="210.0" rx="4.6" ry="5.8" fill="#10b030"/><ellipse cx="256.3" cy="194.7" rx="3.4" ry="4.1" fill="#60a8e8"/><ellipse cx="283.4" cy="190.6" rx="1.8" ry="2.1" fill="#30a0c0"/><ellipse cx="291.5" cy="192.0" rx="1.5" ry="1.8" fill="#80a0e0"/><ellipse cx="308.6" cy="190.9" rx="1.8" ry="1.8" fill="#40a040"/><ellipse cx="309.4" cy="187.8" rx="2.6" ry="3" fill="#a050d0"/><ellipse cx="266.9" cy="210.7" rx="4.3" ry="5.4" fill="#407818"/><ellipse cx="329.0" cy="219.9" rx="3.5" ry="4.6" fill="#305820"/><ellipse cx="265.0" cy="225.6" rx="4.3" ry="5.4" fill="#1010d0"/><ellipse cx="257.1" cy="225.6" rx="1.2" ry="1.2" fill="#d0d0e0"/><ellipse cx="231.6" cy="218.1" rx="0.9" ry="0.9" fill="#e0d000"/><ellipse cx="11.8" cy="240.6" rx="4.4" ry="5.6" fill="#703020"/><ellipse cx="26.8" cy="246.3" rx="5.3" ry="6.7" fill="#4060e0"/><ellipse cx="64.4" cy="238.0" rx="1.8" ry="2.1" fill="#e03060"/><ellipse cx="52.6" cy="238.9" rx="1" ry="1" fill="#a0d020"/><ellipse cx="118.6" cy="235.7" rx="2.6" ry="3.2" fill="#208840"/><ellipse cx="66.7" cy="253.0" rx="2.5" ry="3.2" fill="#a0c0a0"/><ellipse cx="84.5" cy="253.7" rx="2.5" ry="3.2" fill="#30a060"/><ellipse cx="138.5" cy="265.2" rx="2.6" ry="3.2" fill="#f01010"/><ellipse cx="60.0" cy="285.1" rx="2.5" ry="2.8" fill="#c02070"/><ellipse cx="62.1" cy="272.2" rx="3.9" ry="4.9" fill="#305010"/><ellipse cx="65.3" cy="280.7" rx="5.6" ry="6.7" fill="#102410"/><ellipse cx="54.7" cy="282.1" rx="1" ry="1" fill="#e0a060"/><ellipse cx="11.8" cy="289.2" rx="2.5" ry="3" fill="#305060"/><ellipse cx="17.3" cy="287.2" rx="1" ry="1" fill="#2080e0"/><ellipse cx="12.7" cy="298.9" rx="1.8" ry="2.1" fill="#20a0a0"/><ellipse cx="66.2" cy="295.2" rx="2.6" ry="3.5" fill="#70c0b8"/><ellipse cx="26.1" cy="302.4" rx="2.8" ry="3.5" fill="#905030"/><ellipse cx="127.0" cy="289.5" rx="4.2" ry="5.3" fill="#d080b0"/><ellipse cx="116.8" cy="295.2" rx="2.8" ry="3.5" fill="#905030"/><ellipse cx="132.7" cy="315.6" rx="5.6" ry="7.4" fill="#10a0a8"/><ellipse cx="23.3" cy="327.1" rx="3.5" ry="4.4" fill="#403840"/><ellipse cx="49.4" cy="332.4" rx="5.8" ry="7.6" fill="#6018e0"/><ellipse cx="39.5" cy="331.0" rx="1.8" ry="2.1" fill="#8060d0"/><ellipse cx="38.8" cy="338.9" rx="4.4" ry="5.6" fill="#80c0a0"/><ellipse cx="39.5" cy="348.1" rx="2.6" ry="3.2" fill="#50a040"/><ellipse cx="88.9" cy="323.9" rx="4.2" ry="5.3" fill="#108090"/><ellipse cx="91.4" cy="342.5" rx="3.9" ry="4.9" fill="#e080b0"/><ellipse cx="66.3" cy="349.2" rx="3.5" ry="4.4" fill="#1020d0"/><ellipse cx="52.8" cy="359.8" rx="1.9" ry="2.5" fill="#3050d0"/><ellipse cx="118.8" cy="342.5" rx="4.4" ry="5.6" fill="#a070e0"/><ellipse cx="118.8" cy="353.9" rx="4.4" ry="5.3" fill="#183020"/><ellipse cx="128.5" cy="363.3" rx="1.8" ry="2.1" fill="#30b080"/><ellipse cx="166.9" cy="338.9" rx="3.9" ry="4.9" fill="#1010a0"/><ellipse cx="155.3" cy="353.0" rx="1.8" ry="2.1" fill="#a04010"/><ellipse cx="214.6" cy="234.8" rx="5.6" ry="7.4" fill="#d08020"/><ellipse cx="197.9" cy="236.6" rx="3.9" ry="4.4" fill="#1050c0"/><ellipse cx="198.4" cy="231.3" rx="2.5" ry="3.2" fill="#e8b030"/><ellipse cx="207.0" cy="240.5" rx="1.8" ry="1.8" fill="#2020a0"/><ellipse cx="242.3" cy="241.0" rx="3.5" ry="4.4" fill="#1850e8"/><ellipse cx="284.2" cy="241.9" rx="5.8" ry="7.6" fill="#707010"/><ellipse cx="223.3" cy="246.8" rx="2" ry="2" fill="#400830"/><ellipse cx="192.8" cy="256.4" rx="3.9" ry="4.9" fill="#e0b060"/><ellipse cx="201.2" cy="266.6" rx="2.5" ry="3.2" fill="#20a030"/><ellipse cx="258.9" cy="270.5" rx="4.2" ry="5.3" fill="#1060d8"/><ellipse cx="265.1" cy="278.1" rx="4.2" ry="5.3" fill="#509060"/><ellipse cx="270.4" cy="271.5" rx="4.9" ry="6.7" fill="#a8b8b8"/><ellipse cx="294.8" cy="273.6" rx="5.8" ry="7.6" fill="#e84888"/><ellipse cx="312.9" cy="260.1" rx="4.9" ry="6.7" fill="#30a040"/><ellipse cx="320.9" cy="247.2" rx="4.2" ry="4.4" fill="#208030"/><ellipse cx="325.6" cy="259.6" rx="3.9" ry="6.5" fill="#c0c020"/><ellipse cx="329.2" cy="257.8" rx="3.9" ry="4.9" fill="#d050d0"/><ellipse cx="320.0" cy="256.4" rx="5.6" ry="7.6" fill="#202060"/><ellipse cx="234.8" cy="286.0" rx="3.9" ry="4.9" fill="#7030c0"/><ellipse cx="213.6" cy="296.6" rx="5.6" ry="7.4" fill="#d050d8"/><ellipse cx="240.9" cy="300.1" rx="3.9" ry="4.9" fill="#4080e0"/><ellipse cx="248.5" cy="302.2" rx="2.6" ry="3.5" fill="#10a030"/><ellipse cx="230.9" cy="306.6" rx="4.2" ry="5.3" fill="#8040e0"/><ellipse cx="228.6" cy="312.8" rx="1.2" ry="1.2" fill="#10c0d0"/><ellipse cx="312.9" cy="289.9" rx="4.2" ry="5.3" fill="#902070"/><ellipse cx="282.0" cy="294.0" rx="1.8" ry="2.1" fill="#c05030"/><ellipse cx="199.5" cy="319.5" rx="2.8" ry="3.5" fill="#80c020"/><ellipse cx="263.0" cy="325.2" rx="2.1" ry="3" fill="#e0e0e0"/><ellipse cx="251.0" cy="329.6" rx="1" ry="1" fill="#a02020"/><ellipse cx="308.0" cy="333.3" rx="4.9" ry="6.7" fill="#e0c060"/><ellipse cx="275.9" cy="342.5" rx="4.2" ry="5.3" fill="#e020d0"/><ellipse cx="284.7" cy="340.7" rx="3.9" ry="4.9" fill="#502090"/><ellipse cx="300.9" cy="336.8" rx="1.2" ry="1.2" fill="#402060"/><ellipse cx="292.1" cy="335.4" rx="1" ry="1" fill="#a04030"/><ellipse cx="236.0" cy="356.9" rx="3.5" ry="4.4" fill="#8050b0"/><ellipse cx="214.8" cy="358.0" rx="3.2" ry="3.9" fill="#403028"/><ellipse cx="220.3" cy="360.1" rx="2.8" ry="3.5" fill="#405090"/><ellipse cx="194.2" cy="306.3" rx="2" ry="2" fill="#6050c0"/><ellipse cx="179.7" cy="305.4" rx="1" ry="1" fill="#e080a0"/></svg>
<div class="t" style="left:294px;top:133px;font-size:12px;color:#9a9a9a;transform:scaleX(.81)">PotPlayer</div>
<svg class="a" style="left:340px;top:136px" width="8" height="5"><path d="M0.5 0.5 L4 4 L7.5 0.5" stroke="#555" fill="none"/></svg>
<div class="a" style="left:352px;top:131px;width:1px;height:15px;background:#101010"></div>
<div class="t" style="left:358px;top:133px;font-size:12px;color:#404040;transform:scaleX(.8)">MPEG TS</div>
<div class="a" style="left:404px;top:131px;width:1px;height:15px;background:#101010"></div>
<div class="t" style="left:412px;top:133px;font-size:12px;color:#b8b8b8;transform:scaleX(.8)">127.0.0.1:6969</div>
<svg class="a" style="left:556px;top:131px" width="70" height="14">
 <path d="M4 1 H8 M5 1 V6 M7 1 V6 M3 6.5 H9 M6 6.5 V11 M3 11 H9" stroke="#3c3c3c" stroke-width="1.3" fill="none"/>
 <path d="M21 10.5 H28" stroke="#3c3c3c" stroke-width="1.5"/>
 <rect x="38.5" y="3.5" width="7" height="7" stroke="#3c3c3c" fill="none"/><path d="M38.5 5 H45.5" stroke="#3c3c3c" stroke-width="2"/>
 <path d="M59 3 L66 10 M66 3 L59 10" stroke="#3c3c3c" stroke-width="1.1"/>
</svg>
<!-- info panel -->
<div class="a" style="left:287px;top:573px;width:345px;height:77px;background:#131313"></div>
<div class="a" style="left:493px;top:588px;width:132px;height:28px;background:repeating-linear-gradient(90deg,#141820 0 2.3px,#101010 2.3px 3.06px)"></div>
<svg class="a" style="left:284px;top:119px;pointer-events:none" width="352" height="596"><rect x="209.30" y="469.0" width="2.3" height="28.0" fill="#1a4aae"/><rect x="212.36" y="471.7" width="2.3" height="25.3" fill="#1a4aae"/><rect x="212.36" y="469.0" width="2.3" height="1.2" fill="#1a4aae"/><rect x="215.42" y="477.0" width="2.3" height="20.0" fill="#1a4aae"/><rect x="215.42" y="469.0" width="2.3" height="1.2" fill="#1a4aae"/><rect x="218.48" y="481.0" width="2.3" height="16.0" fill="#1a4aae"/><rect x="218.48" y="469.0" width="2.3" height="1.2" fill="#1a4aae"/><rect x="221.54" y="477.0" width="2.3" height="20.0" fill="#1a4aae"/><rect x="221.54" y="469.0" width="2.3" height="1.2" fill="#1a4aae"/><rect x="224.60" y="469.0" width="2.3" height="28.0" fill="#1a4aae"/><rect x="224.60" y="469.0" width="2.3" height="1.2" fill="#1a4aae"/><rect x="227.66" y="479.7" width="2.3" height="17.3" fill="#1a4aae"/><rect x="227.66" y="469.0" width="2.3" height="1.2" fill="#1a4aae"/><rect x="230.72" y="481.0" width="2.3" height="16.0" fill="#1a4aae"/><rect x="233.78" y="489.0" width="2.3" height="8.0" fill="#1a4aae"/><rect x="236.84" y="489.0" width="2.3" height="8.0" fill="#1a4aae"/><rect x="239.90" y="486.3" width="2.3" height="10.7" fill="#1a4aae"/><rect x="239.90" y="486.7" width="2.3" height="1.2" fill="#1a4aae"/><rect x="242.96" y="481.0" width="2.3" height="16.0" fill="#1a4aae"/><rect x="246.02" y="486.3" width="2.3" height="10.7" fill="#1a4aae"/><rect x="246.02" y="481.9" width="2.3" height="1.2" fill="#1a4aae"/><rect x="249.08" y="491.0" width="2.3" height="6.0" fill="#1a4aae"/><rect x="252.14" y="489.0" width="2.3" height="8.0" fill="#1a4aae"/><rect x="255.20" y="481.0" width="2.3" height="16.0" fill="#1a4aae"/><rect x="255.20" y="477.4" width="2.3" height="1.2" fill="#1a4aae"/><rect x="258.26" y="486.3" width="2.3" height="10.7" fill="#1a4aae"/><rect x="261.32" y="481.0" width="2.3" height="16.0" fill="#1a4aae"/><rect x="264.38" y="487.7" width="2.3" height="9.3" fill="#1a4aae"/><rect x="267.44" y="486.3" width="2.3" height="10.7" fill="#1a4aae"/><rect x="270.50" y="481.0" width="2.3" height="16.0" fill="#1a4aae"/><rect x="270.50" y="477.4" width="2.3" height="1.2" fill="#1a4aae"/><rect x="273.56" y="489.0" width="2.3" height="8.0" fill="#1a4aae"/><rect x="273.56" y="477.4" width="2.3" height="1.2" fill="#1a4aae"/><rect x="276.62" y="486.3" width="2.3" height="10.7" fill="#1a4aae"/><rect x="279.68" y="486.3" width="2.3" height="10.7" fill="#1a4aae"/><rect x="282.74" y="487.7" width="2.3" height="9.3" fill="#1a4aae"/><rect x="282.74" y="481.9" width="2.3" height="1.2" fill="#1a4aae"/><rect x="285.80" y="475.0" width="2.3" height="22.0" fill="#1a4aae"/><rect x="288.86" y="493.7" width="2.3" height="3.3" fill="#1a4aae"/><rect x="291.92" y="489.0" width="2.3" height="8.0" fill="#1a4aae"/><rect x="294.98" y="483.0" width="2.3" height="14.0" fill="#1a4aae"/><rect x="294.98" y="481.9" width="2.3" height="1.2" fill="#1a4aae"/><rect x="298.04" y="489.0" width="2.3" height="8.0" fill="#1a4aae"/><rect x="301.10" y="486.3" width="2.3" height="10.7" fill="#1a4aae"/><rect x="304.16" y="489.0" width="2.3" height="8.0" fill="#1a4aae"/><rect x="307.22" y="491.0" width="2.3" height="6.0" fill="#1a4aae"/><rect x="307.22" y="481.9" width="2.3" height="1.2" fill="#1a4aae"/><rect x="310.28" y="487.7" width="2.3" height="9.3" fill="#1a4aae"/><rect x="310.28" y="481.9" width="2.3" height="1.2" fill="#1a4aae"/><rect x="313.34" y="481.0" width="2.3" height="16.0" fill="#1a4aae"/><rect x="316.40" y="487.7" width="2.3" height="9.3" fill="#1a4aae"/><rect x="319.46" y="489.0" width="2.3" height="8.0" fill="#1a4aae"/><rect x="322.52" y="493.7" width="2.3" height="3.3" fill="#1a4aae"/><rect x="322.52" y="486.7" width="2.3" height="1.2" fill="#1a4aae"/><rect x="325.58" y="491.0" width="2.3" height="6.0" fill="#1a4aae"/><rect x="325.58" y="486.7" width="2.3" height="1.2" fill="#1a4aae"/><rect x="328.64" y="487.7" width="2.3" height="9.3" fill="#1a4aae"/><rect x="331.70" y="489.0" width="2.3" height="8.0" fill="#1a4aae"/><rect x="334.76" y="492.3" width="2.3" height="4.7" fill="#1a4aae"/><rect x="337.82" y="492.3" width="2.3" height="4.7" fill="#1a4aae"/><rect x="209" y="468" width="133" height="30" fill="url(#hl)"/></svg>
<div class="t" style="left:297px;top:588px;font-size:35px;font-weight:bold;color:#f4f4f4;transform:scaleX(.737)">27:58</div>
<div class="t" style="left:316px;top:625px;font-size:14px;color:#707070;transform:scaleX(.85)">28:03</div>
<div class="t" style="left:375px;top:597px;font-size:12px;font-weight:bold;color:#f0f0f0;transform:scaleX(.8)">127.0.0.1:6969</div>
<div class="t" style="left:374px;top:623px;font-size:9px;color:#4a4a4a;transform:scaleX(.8)">MP2</div>
<div class="t" style="left:400px;top:623px;font-size:9px;color:#4a4a4a;transform:scaleX(.8)">192kbps</div>
<div class="t" style="left:438px;top:623px;font-size:9px;color:#4a4a4a;transform:scaleX(.8)">48khz</div>
<div class="a" style="left:557px;top:624px;width:12px;height:12px;background:#0c0c0c"></div>
<div class="a" style="left:581px;top:624px;width:12px;height:12px;background:#0c0c0c"></div>
<div class="a" style="left:601px;top:624px;width:12px;height:12px;background:#0c0c0c"></div>
<div class="a" style="left:615px;top:624px;width:12px;height:12px;background:#0c0c0c"></div>
<div class="t" style="left:560px;top:627px;font-size:8px;color:#444">A</div>
<div class="t" style="left:584px;top:627px;font-size:8px;color:#444">B</div>
<svg class="a" style="left:570px;top:624px" width="60" height="12">
 <path d="M2 4 H8 L7 3 M9 8 H3 L4 9" stroke="#3a3a3a" fill="none"/>
 <rect x="33.5" y="2.5" width="8" height="6" stroke="#555" fill="none"/><path d="M37.5 6 V11 L36 9.5" stroke="#555" fill="none"/>
 <path d="M47 3 L55 9 M47 9 L55 3" stroke="#555" stroke-width="1.1"/>
</svg>
<!-- seek -->
<div class="a" style="left:291px;top:660px;width:252px;height:2px;background:#cca400"></div>
<div class="a" style="left:539.5px;top:657px;width:7px;height:8px;border-radius:50%;background:#f0f0f0"></div>
<svg class="a" style="left:557px;top:656px" width="11" height="11"><path d="M1 3.5 H3.5 L7 1 V10 L3.5 7.5 H1 Z" fill="#5a5a5a"/><path d="M9 3 V8" stroke="#3a3a3a"/></svg>
<div class="a" style="left:571px;top:660px;width:39px;height:2px;background:#cca400"></div>
<div class="a" style="left:610px;top:660px;width:14px;height:2px;background:#1e1e1e"></div>
<div class="a" style="left:606.5px;top:657px;width:7px;height:8px;border-radius:50%;background:#f0f0f0"></div>
<!-- controls -->
<div class="a" style="left:287px;top:673px;width:345px;height:38px;background:#080808"></div>
<div class="a" style="left:317px;top:673px;width:1px;height:38px;background:#121212"></div>
<div class="a" style="left:348px;top:673px;width:1px;height:38px;background:#121212"></div>
<div class="a" style="left:380px;top:673px;width:1px;height:38px;background:#121212"></div>
<div class="a" style="left:411px;top:673px;width:1px;height:38px;background:#121212"></div>
<div class="a" style="left:443px;top:673px;width:1px;height:38px;background:#121212"></div>
<div class="a" style="left:601px;top:673px;width:1px;height:38px;background:#121212"></div>
<svg class="a" style="left:284px;top:673px" width="352" height="38">
 <rect x="14.3" y="14.5" width="2" height="10" fill="#e8e8e8"/><rect x="19" y="14.5" width="2" height="10" fill="#e8e8e8"/>
 <rect x="45.7" y="15.5" width="6.6" height="8" fill="#e0e0e0"/>
 <rect x="76.5" y="15.5" width="1.6" height="8" fill="#e0e0e0"/><path d="M84 15.5 V23.5 L78 19.5 Z" fill="#e0e0e0"/>
 <path d="M108 15.5 V23.5 L114 19.5 Z" fill="#e0e0e0"/><rect x="114" y="15.5" width="1.6" height="8" fill="#e0e0e0"/>
 <path d="M138.5 21 L142.5 16 L146.5 21 Z" fill="#e0e0e0"/><rect x="138.5" y="22.3" width="8" height="1.6" fill="#e0e0e0"/>
 <rect x="271.5" y="14" width="9" height="12.5" rx="1" fill="#5a5a5a"/><rect x="273.5" y="16" width="5" height="8.5" fill="#2a2a2a"/>
 <circle cx="300" cy="19.5" r="5.6" fill="none" stroke="#5a5a5a" stroke-width="2" stroke-dasharray="1.7 1.2"/><circle cx="300" cy="19.5" r="4" fill="#5a5a5a"/><circle cx="300" cy="19.5" r="1.6" fill="#080808"/>
 <rect x="328.5" y="15" width="10" height="1.6" fill="#8a8a8a"/><rect x="328.5" y="18.8" width="10" height="1.6" fill="#8a8a8a"/><rect x="328.5" y="22.6" width="10" height="1.6" fill="#8a8a8a"/>
</svg>
<div class="t" style="left:450px;top:689px;font-size:10.5px;color:#d0d0d0;transform:scaleX(.8)">00:27:58</div>
<div class="t" style="left:487px;top:689px;font-size:10.5px;color:#4a4a4a;transform:scaleX(.8)">/ 00:28:03</div>
<!-- /POTPLAYER -->

<!-- BROWSER -->
<div class="a" style="left:636px;top:120px;width:332px;height:595px;background:#060606"></div>
<div class="t" style="left:642px;top:134px;font-size:10px;color:#a8a8a8;transform:scaleX(.85)">Browser</div>
<div class="a" style="left:884px;top:136px;width:28px;height:2px;background:#c8a000"></div>
<div class="a" style="left:911px;top:134px;width:9px;height:6px;border-radius:2px;background:#e8e8e8"></div>
<svg class="a" style="left:928px;top:131px" width="36" height="13">
 <path d="M3 2 V11 M10 2 V11 M3 6.5 H10" stroke="#444" stroke-width="1.4"/><rect x="4.5" y="4" width="4" height="5" fill="#444"/>
 <path d="M23 2.5 L30 9.5 M30 2.5 L23 9.5" stroke="#505050" stroke-width="1.1"/>
</svg>
<!-- content -->
<div class="a" style="left:638px;top:184px;width:327px;height:528px;background:#181818"></div>
<!-- tabs -->
<div class="a" style="left:638px;top:155px;width:54px;height:28px;background:#1c1c1c;border-right:1px solid #000"></div>
<div class="a" style="left:693px;top:155px;width:85px;height:30px;background:#181818"></div>
<div class="a" style="left:778px;top:155px;width:118px;height:28px;background:#1c1c1c;border-left:1px solid #000;border-right:1px solid #000"></div>
<div class="a" style="left:897px;top:155px;width:68px;height:28px;background:#1c1c1c"></div>
<div class="t" style="left:644px;top:164px;font-size:12px;color:#6e6e6e;transform:scaleX(.8)">Navigovat</div>
<div class="t" style="left:699px;top:164px;font-size:12px;color:#d8d8d8;transform:scaleX(.754)">Prohlížeč nabídky</div>
<div class="t" style="left:784px;top:164px;font-size:12px;color:#6e6e6e;transform:scaleX(.785)">Nástroj procházení titulků</div>
<div class="a" style="left:897px;top:155px;width:35px;height:28px;overflow:hidden"><div class="t" style="left:2px;top:9px;font-size:12px;color:#6e6e6e;transform:scaleX(.8)">Online Subtitles</div></div>
<div class="a" style="left:933px;top:161px;width:14px;height:17px;background:#2e2e2e;border-radius:1px"></div>
<div class="a" style="left:948px;top:161px;width:14px;height:17px;background:#2e2e2e;border-radius:1px"></div>
<svg class="a" style="left:933px;top:161px" width="30" height="17"><path d="M5 5 L9 8.5 L5 12" stroke="#b0b0b0" stroke-width="1.4" fill="none"/><path d="M18.5 7 L22 10.5 L25.5 7" stroke="#b0b0b0" stroke-width="1.4" fill="none"/></svg>
<!-- rows -->
<div class="a" style="left:638px;top:190px;width:327px;height:19px;background:#141414"></div>
<div class="a" style="left:643px;top:195px;width:8px;height:7px;background:#f0b830;border-radius:1px"></div>
<div class="a" style="left:643px;top:194px;width:4px;height:2px;background:#f0b830"></div>
<div class="t" style="left:658px;top:195px;font-size:10px;color:#aaa">..</div>
<div class="a" style="left:638px;top:210px;width:327px;height:20px;background:#141414"></div>
<div class="a" style="left:645.5px;top:218px;width:4px;height:4px;border-radius:50%;background:#2060e8"></div>
<div class="t" style="left:658px;top:214px;font-size:12px;color:#cfcfcf;transform:scaleX(.723)">Audio #1(Program 1) - MPEG Audio, 48.0 kHz, 2 Ch, 192 kbit/s (PID:0x006...</div>
<!-- /BROWSER -->


<!-- TERMINAL -->
<style>
.tc{font-size:15px;font-weight:bold;font-style:italic;color:#000;transform:translateX(-50%) scaleX(.8);transform-origin:50% 0}
.dr{background:linear-gradient(rgba(90,90,90,1) 0,rgba(140,140,140,.9) 2px,rgba(190,190,190,.7) 4px,rgba(230,230,230,.4) 7px,rgba(255,255,255,0) 10px),repeating-linear-gradient(#fdfdfd 0 1px,#e9e9e9 1px 2px)}
.dt{font-size:14px;font-weight:bold;color:#000;transform:scaleX(.78);-webkit-text-stroke:.35px #000}
.sp{font-size:10px;font-weight:bold;color:#000;transform:scaleX(.8)}
</style>
<div class="a" style="left:470px;top:-20px;width:760px;height:114px;background:#000;border-radius:7px;box-shadow:0 40px 66px -37px rgba(0,0,0,1)"></div>
<div class="a" style="left:476px;top:0;width:724px;height:8px;background:#141414"></div>
<div class="a" style="left:481px;top:10px;width:142px;height:20px;background:#ff5a00"></div>
<div class="t tc" style="left:552.0px;top:13px;transform:translateX(-50%) scaleX(.75)">Berlin-Paris-Vienna-Roma</div>
<div class="a dr" style="left:481px;top:32px;width:142px;height:24px"></div>
<div class="t dt" style="left:486px;top:39.5px">Thu, Jul 25</div>
<div class="t dt" style="left:573.0px;top:39.5px">10:25:47</div>
<div class="a" style="left:625px;top:10px;width:141px;height:20px;background:#ff0000"></div>
<div class="t tc" style="left:695.5px;top:13px">Dubai</div>
<div class="a dr" style="left:625px;top:32px;width:141px;height:24px"></div>
<div class="t dt" style="left:630px;top:39.5px">Thu, Jul 25</div>
<div class="t dt" style="left:725.0px;top:39.5px">12:25</div>
<div class="t sp" style="left:701px;top:35px">+2</div>
<div class="a" style="left:767px;top:10px;width:142px;height:20px;background:#10c010"></div>
<div class="t tc" style="left:838.0px;top:13px">Moscow</div>
<div class="a dr" style="left:767px;top:32px;width:142px;height:24px"></div>
<div class="t dt" style="left:772px;top:39.5px">Thu, Jul 25</div>
<div class="t dt" style="left:868.0px;top:39.5px">11:25</div>
<div class="t sp" style="left:845px;top:35px">+1</div>
<div class="a" style="left:911px;top:10px;width:141px;height:20px;background:#0850c8"></div>
<div class="t tc" style="left:981.5px;top:13px">London, Eng</div>
<div class="a dr" style="left:911px;top:32px;width:141px;height:24px"></div>
<div class="t dt" style="left:916px;top:39.5px">Thu, Jul 25</div>
<div class="t dt" style="left:1003.5px;top:39.5px">09:25:47</div>
<div class="t sp" style="left:990px;top:35px">-1</div>
<div class="a" style="left:982px;top:45px;width:15px;height:9px;overflow:hidden"><div class="t sp" style="left:-2.5px;top:1px">DST</div></div>
<div class="a" style="left:1054px;top:10px;width:142px;height:20px;background:#10c0b8"></div>
<div class="t tc" style="left:1125.0px;top:13px;transform:translateX(-50%) scaleX(.84)">Rabat-Casablanca</div>
<div class="a dr" style="left:1054px;top:32px;width:142px;height:24px"></div>
<div class="t dt" style="left:1059px;top:39.5px">Thu, Jul 25</div>
<div class="t dt" style="left:1154.0px;top:39.5px">09:25</div>
<div class="t sp" style="left:1133px;top:35px">-1</div>
<div class="t" style="left:476px;top:62px;font-family:'Liberation Mono',monospace;font-size:16.5px;color:#c4c4c4;transform:scaleX(.743)">C:\Users\Roman Dávid&gt;Signal monitoring_PF 450_LC/SK_Eutelsat 21B-21.5°E_11 599 Medina FM_22.7.24+</div>
<!-- /TERMINAL -->
<!-- LOGO -->
<div class="a" style="left:573px;top:80px;width:54px;height:52px;background:#fff"></div>
<svg class="a" style="left:573px;top:80px" width="54" height="52" viewBox="0 0 54 52">
 <path d="M11 43 A24 21.5 0 0 1 46 10.5" stroke="#141480" stroke-width="1.5" fill="none"/>
 <path d="M47.5 12.5 A24 21.5 0 0 1 44.5 43" stroke="#141480" stroke-width="1.5" fill="none"/>
 <path d="M10 43.3 H45" stroke="#141480" stroke-width="1.4"/>
 <path d="M19.5 7.5 Q21 6.5 22.5 9 L33 40 Q31 41 30 39 Z" stroke="#141480" stroke-width="0.9" fill="none"/>
 <path d="M21.5 17 L22.5 29 L30 36" stroke="#3a3a9a" stroke-width="0.8" fill="none"/>
 <path d="M28 23.5 L37 23.5 L33 28" stroke="#2a2a90" stroke-width="0.9" fill="none"/>
 <circle cx="17" cy="32.5" r="2.3" stroke="#3a3a9a" stroke-width="0.9" fill="none"/>
 <path d="M13 43 L19 36 L22 43 M17 35 L22 31" stroke="#141480" stroke-width="1.1" fill="none"/>
 <path d="M42 14.5 Q47 20 47 27" stroke="#c81010" stroke-width="1.8" fill="none"/>
 <path d="M39.5 17 Q43.5 21.5 44 27.5" stroke="#c81010" stroke-width="1.8" fill="none"/>
 <text x="1.8" y="49.8" font-family="Liberation Sans" font-weight="bold" font-size="7" textLength="51" lengthAdjust="spacingAndGlyphs" stroke-width=".35"><tspan fill="#c01010" stroke="#c01010">DX</tspan><tspan fill="#101078" stroke="#101078">SATCS.COM</tspan></text>
</svg>
<!-- /LOGO -->


</body></html>
